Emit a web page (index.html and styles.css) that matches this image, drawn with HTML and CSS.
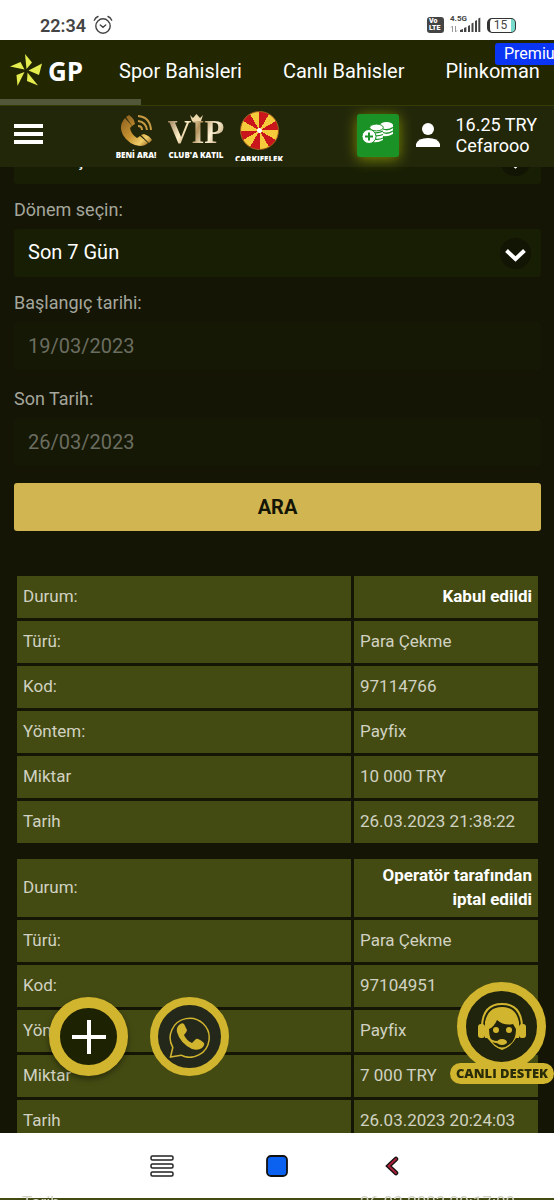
FILE: index.html
```html
<!DOCTYPE html>
<html lang="tr">
<head>
    <meta charset="UTF-8">
    <title>GP - İşlem Geçmişi</title>
    <meta name="viewport" content="width=device-width, initial-scale=1.0">
    <link rel="stylesheet" href="styles.css">
</head>
<body>

<div class="status-bar">
    <span class="clock">22:34</span>
    <svg class="alarm" width="20" height="20" viewBox="0 0 20 20" fill="none" stroke="#444" stroke-width="1.4" stroke-linecap="round">
        <circle cx="10" cy="11" r="7.2"/>
        <path d="M7.3 10l2.7 2.3 2.7-2.3M1.3 5.2Q2.5 2.6 5 1.5M18.7 5.2Q17.5 2.6 15 1.5"/>
    </svg>
    <div class="status-right">
        <span class="volte">Vo<br>LTE</span>
        <div class="signal">
            <span>4.5G</span>
            <svg width="31" height="16" viewBox="0 0 31 16" fill="#444">
                <path d="M10 15v-2l3-1v3zM14 15v-4l2.4-1v5zM18 15V9l2-1v7zM21.500 15V6.500l2-1V15zM25 15V4l2-1v12zM28.300 15V1.500l2-1V15z"/>
                <path d="M2.500 15V9M1 10.500L2.500 9M5.500 9v6M7 13.500L5.500 15" stroke="#999" fill="none"/>
            </svg>
        </div>
        <div class="battery"><span>15</span></div>
    </div>
</div>

<header class="site-header">
    <nav class="top-nav">
        <a class="logo" href="#">
            <svg width="32" height="33" viewBox="0 0 32 33" fill="#e4ec4e">
                <path d="M15 0L22 8.500 16.500 15z"/>
                <path d="M32 9.500L29 21 18.500 16.500z"/>
                <path d="M28 31.500L17 27 17.500 18.500z"/>
                <path d="M7.500 32L6.500 21 14.500 18z"/>
                <path d="M0 12.500L10.500 8 14.500 15.500z"/>
            </svg>
            <span>GP</span>
        </a>
        <a href="#">Spor Bahisleri</a>
        <a href="#">Canlı Bahisler</a>
        <a href="#">Plinkoman</a>
        <span class="premium">Premium</span>
        <div class="scroll-thumb"></div>
    </nav>

    <div class="user-bar">
        <button class="menu-btn" type="button" aria-label="Menü"><i></i><i></i><i></i></button>

        <div class="promos">
            <a class="promo call" href="#">
                <svg width="32" height="32" viewBox="0 0 32 32">
                    <defs>
                        <linearGradient id="gold" x1="0" y1="0" x2="1" y2="1">
                            <stop offset="0" stop-color="#8d6120"/>
                            <stop offset=".5" stop-color="#c89431"/>
                            <stop offset=".8" stop-color="#f0cd69"/>
                            <stop offset="1" stop-color="#9b6920"/>
                        </linearGradient>
                    </defs>
                    <path fill="url(#gold)" d="M5 3Q-2 11 3 20q6 10 17 11 5 0 8-3l-8-7-3 2q-6-4-7-10l2-2z"/>
                    <path fill="url(#gold)" d="M6 2l3-2q5 3 6 9l-3 2zM21 20l3-1q6 2 8 6l-3 3z"/>
                    <path fill="none" stroke="#c59a43" stroke-width="2" d="M18 11q4 0 4 4M18 6q8 1 9 9M18 1q12 1 13 14"/>
                </svg>
                <span>BENİ ARA!</span>
            </a>
            <a class="promo vip" href="#">
                <svg class="crown" width="15" height="8" viewBox="0 0 15 8" fill="#ecd8aa">
                    <path d="M1 1l3 3 3.500-4L11 4l3-3-2 6H3z"/>
                </svg>
                <b>VIP</b>
                <span>CLUB'A KATIL</span>
            </a>
            <a class="promo wheel" href="#">
                <div class="disc"></div>
                <span>ÇARKIFELEK</span>
            </a>
        </div>

        <button class="deposit" type="button" aria-label="Para yatır">
            <svg width="32" height="24" viewBox="0 0 32 24">
                <g fill="#fff">
                    <path d="M18 6v8q6 3 13-1V4z"/>
                    <ellipse cx="24.500" cy="4" rx="6.500" ry="3"/>
                    <path d="M8 8v12q6 3 13-1V7z"/>
                    <ellipse cx="14.500" cy="6.500" rx="6.800" ry="3.400" stroke="#1b9225"/>
                </g>
                <path d="M21 8q5 2 10-1.500M21 11.500q5 2 10-1.500M9 11q6 2 12-1M11 14.500q5 1 10-1M12 18q5 1 9-1" fill="none" stroke="#1b9225" stroke-width="1.300"/>
                <circle cx="7" cy="15.500" r="7" fill="#fff" stroke="#1b9225"/>
                <path d="M7 11.500v8M3 15.500h8" stroke="#1b9225" stroke-width="2"/>
            </svg>
        </button>

        <a class="account" href="#">
            <svg width="24" height="24" viewBox="0 0 24 24" fill="#fff">
                <circle cx="12" cy="6" r="6"/>
                <path d="M0 24v-3q2-6 12-6t12 6v3z"/>
            </svg>
            <span>16.25 TRY<br>Cefarooo</span>
        </a>
    </div>
</header>

<main>
    <form class="filter">
        <div class="select-box">
            <select id="type" aria-label="Tür"><option>Para Çekme</option></select>
            <svg viewBox="0 0 31 31"><path d="M6.500 12.500l9 8.500 9-8.500" fill="none" stroke="#fff" stroke-width="4"/></svg>
        </div>

        <label for="period">Dönem seçin:</label>
        <div class="select-box">
            <select id="period"><option>Son 7 Gün</option></select>
            <svg viewBox="0 0 31 31"><path d="M6.500 12.500l9 8.500 9-8.500" fill="none" stroke="#fff" stroke-width="4"/></svg>
        </div>

        <label for="from">Başlangıç tarihi:</label>
        <input type="text" id="from" value="19/03/2023" disabled>

        <label for="to">Son Tarih:</label>
        <input type="text" id="to" value="26/03/2023" disabled>

        <button class="search" type="button">ARA</button>
    </form>

    <table>
        <colgroup><col><col class="value"></colgroup>
        <tr><td>Durum:</td><td class="state">Kabul edildi</td></tr>
        <tr><td>Türü:</td><td>Para Çekme</td></tr>
        <tr><td>Kod:</td><td>97114766</td></tr>
        <tr><td>Yöntem:</td><td>Payfix</td></tr>
        <tr><td>Miktar</td><td>10 000 TRY</td></tr>
        <tr><td>Tarih</td><td>26.03.2023 21:38:22</td></tr>
    </table>

    <table>
        <colgroup><col><col class="value"></colgroup>
        <tr><td>Durum:</td><td class="state">Operatör tarafından iptal edildi</td></tr>
        <tr><td>Türü:</td><td>Para Çekme</td></tr>
        <tr><td>Kod:</td><td>97104951</td></tr>
        <tr><td>Yöntem:</td><td>Payfix</td></tr>
        <tr><td>Miktar</td><td>7 000 TRY</td></tr>
        <tr><td>Tarih</td><td>26.03.2023 20:24:03</td></tr>
    </table>
</main>

<div class="fabs">
    <button class="fab add" type="button" aria-label="Ekle">
        <svg width="34" height="34" viewBox="0 0 34 34" stroke="#fff" stroke-width="4"><path d="M17 0v34M0 17h34"/></svg>
    </button>
    <button class="fab whatsapp" type="button" aria-label="WhatsApp">
        <svg width="42" height="42" viewBox="0 0 42 42">
            <path d="M1.500 41l2.300-9.500A19.500 19.500 0 1 1 12 39.200z" fill="none" stroke="#d2b52f" stroke-width="1.500"/>
            <path fill="#d2b52f" d="M10 9q3-3 5-1l3 6q0 2-3 5 2 5 8 8l4-4q2-1 8 4 1 2-2 5-4 3-10 1Q11 27 8 16q-1-4 2-7z"/>
        </svg>
    </button>
</div>

<a class="support" href="#">
    <div class="support-ring">
        <svg width="50" height="50" viewBox="0 0 50 50">
            <path d="M5 24Q6 2 25 2t20 22" fill="none" stroke="#d2b52f" stroke-width="2"/>
            <rect x="1" y="22" width="7" height="14" rx="3" fill="#d2b52f"/>
            <rect x="42" y="22" width="7" height="14" rx="3" fill="#d2b52f"/>
            <path d="M8 20Q11 5 25 5t17 15v16h-3Q34 45 25 48 16 45 11 36H8z" fill="#d2b52f"/>
            <path d="M12 27q5-2 8-9 7 6 16 4l3 5q0 11-6 15-8 7-16 0-5-5-5-15z" fill="#20240d"/>
            <circle cx="19" cy="28" r="3" fill="#d2b52f"/>
            <circle cx="32" cy="28" r="3" fill="#d2b52f"/>
            <path d="M10 34q4 7 13 6" fill="none" stroke="#d2b52f" stroke-width="2"/>
            <ellipse cx="25" cy="40" rx="5" ry="3" fill="#d2b52f"/>
        </svg>
    </div>
    <span>CANLI DESTEK</span>
</a>

<div class="system-nav">
    <button type="button" aria-label="Son uygulamalar">
        <svg width="24" height="22" viewBox="0 0 24 22" fill="#fff" stroke="#222" stroke-width="1.500">
            <rect x="1" y="1" width="22" height="4" rx="1.500"/>
            <rect x="1" y="9" width="22" height="4" rx="1.500"/>
            <rect x="1" y="17" width="22" height="4" rx="1.500"/>
        </svg>
    </button>
    <button type="button" aria-label="Ana ekran">
        <svg width="22" height="22" viewBox="0 0 22 22"><rect x="1" y="1" width="20" height="20" rx="4" fill="#0b62f0" stroke="#111" stroke-width="1.800"/></svg>
    </button>
    <button type="button" aria-label="Geri">
        <svg width="14" height="20" viewBox="0 0 14 20" fill="none" stroke-linecap="round">
            <path d="M11 3L3.500 10l7.500 7" stroke="#111" stroke-width="4.500"/>
            <path d="M11 3L3.500 10l7.500 7" stroke="#a8213a" stroke-width="2"/>
        </svg>
    </button>
</div>

<!-- next record showing under the system bar -->
<div class="page-edge"><span>Tarih</span><span>26.03.2023 20:17:00</span></div>

</body>
</html>
```
FILE: styles.css
```css
* {
    box-sizing: border-box;
}

body {
    font-family: Roboto, "Liberation Sans", sans-serif;
    background: #141504;
    color: #fff;
    margin: 0;
    height: 100vh;
    overflow: hidden;
}

a {
    color: #fff;
    text-decoration: none;
}

button {
    border: none;
    padding: 0;
    font-family: inherit;
    cursor: pointer;
}

svg {
    display: block;
    flex: none;
}

/* phone status bar */
.status-bar {
    position: relative;
    z-index: 2;
    display: flex;
    align-items: center;
    height: 40px;
    padding: 10px 38px 0 40px;
    background: #fff;
    color: #444;
}

.clock {
    font-size: 18px;
    font-weight: 600;
    margin-right: 7px;
}

.status-right {
    display: flex;
    align-items: center;
    gap: 6px;
    margin-left: auto;
}

.volte {
    width: 17px;
    height: 16px;
    padding: 1px 2px;
    border-radius: 3px;
    background: #444;
    color: #fff;
    font-size: 7px;
    font-weight: 900;
    line-height: 7px;
}

.signal {
    position: relative;
}

.signal span {
    position: absolute;
    top: -2px;
    left: 0;
    font-size: 8px;
    font-weight: bold;
    line-height: 8px;
}

.battery {
    width: 29px;
    height: 15px;
    border: 1px solid #333;
    border-left-width: 3px;
    border-radius: 5px;
    background: linear-gradient(to left, #77dccb 4px, #fff 4px);
    font-size: 12px;
    line-height: 13px;
    text-align: center;
    padding-right: 4px;
}

/* header */
.site-header {
    position: relative;
    z-index: 2;
    background: #22270a;
}

.top-nav {
    position: relative;
    display: flex;
    align-items: center;
    gap: 41px;
    height: 66px;
    padding: 0 0 4px 10px;
    background: #222601;
    border-bottom: 1px solid #353c05;
    font-size: 20px;
    white-space: nowrap;
    overflow: hidden;
}

.logo {
    display: flex;
    align-items: center;
    gap: 6px;
    width: 68px;
    font-family: "Open Sans", sans-serif;
    font-size: 26px;
    font-weight: bold;
}

.premium {
    position: absolute;
    top: 3px;
    left: calc(100% - 59px);
    padding: 0 9px;
    border-radius: 3px;
    background: #0a35f5;
    font-size: 16px;
    line-height: 22px;
}

.scroll-thumb {
    position: absolute;
    left: 0;
    bottom: 0;
    width: 141px;
    height: 6px;
    background: #53573a;
}

.user-bar {
    display: flex;
    align-items: center;
    height: 61px;
    padding: 0 17px 0 14px;
}

.menu-btn {
    display: grid;
    gap: 4px;
    width: 29px;
    background: none;
    margin-bottom: 6px;
}

.menu-btn i {
    height: 4px;
    background: #fff;
}

.promos {
    display: flex;
    flex: 1;
    gap: 10px;
    height: 52px;
    margin-bottom: 4px;
    padding: 4px 0 0 71px;
    overflow: hidden;
}

.promo {
    display: flex;
    flex-direction: column;
    align-items: center;
    font-family: "Open Sans", sans-serif;
    font-size: 8px;
    font-weight: 800;
    line-height: 10px;
    white-space: nowrap;
}

.call {
    width: 44px;
}

.call svg {
    margin: 2px 0 3px;
}

.vip {
    position: relative;
    width: 56px;
}

.vip b {
    font-family: "Liberation Serif", serif;
    font-size: 33px;
    line-height: 35px;
    margin-top: 2px;
    background: linear-gradient(120deg, #8a6b45, #fff0c9 30%, #b3925c 50%, #fff3d6 70%, #a6824e);
    -webkit-background-clip: text;
    background-clip: text;
    color: transparent;
}

.crown {
    position: absolute;
    top: 1px;
    left: 21px;
}

.wheel {
    width: 50px;
}

.disc {
    flex: none;
    width: 39px;
    height: 39px;
    margin: -2px 0 4px;
    border: 1px solid #a3621d;
    border-radius: 50%;
    background: radial-gradient(circle, #fff 2px, transparent 3px), repeating-conic-gradient(#c9161c 0 30deg, #f5cb3c 30deg 60deg);
}

.deposit {
    display: grid;
    place-items: center;
    width: 42px;
    height: 43px;
    margin: 0 17px 2px 0;
    padding-bottom: 6px;
    border-radius: 3px;
    background: #1b9225;
    box-shadow: 0 2px 14px #7d8a05;
}

.account {
    display: flex;
    align-items: center;
    gap: 15px;
    font-size: 18px;
    line-height: 21px;
    margin-bottom: 4px;
}

/* filter form, scrolled a little under the header */
main {
    margin-top: -31px;
    padding: 0 13px 0 14px;
}

.filter {
    display: flex;
    flex-direction: column;
    margin-bottom: 42px;
}

.filter label {
    margin-bottom: 7px;
    color: #a5a69c;
    font-size: 18px;
    line-height: 24px;
}

.select-box {
    position: relative;
    margin-bottom: 14px;
}

.select-box select,
.filter input {
    display: block;
    width: 100%;
    height: 48px;
    padding: 0 14px;
    border: none;
    border-radius: 3px;
    font-family: inherit;
    font-size: 20px;
}

.select-box select {
    appearance: none;
    background: #181e04;
    color: #fff;
    padding-bottom: 2px;
}

.select-box svg {
    position: absolute;
    right: 10px;
    top: 9px;
    width: 31px;
    height: 31px;
    border-radius: 50%;
    background: #121404;
    pointer-events: none;
}

.filter input {
    margin-bottom: 17px;
    background: #151805;
    color: #6b6d60;
}

.search {
    height: 48px;
    border-radius: 3px;
    background: #d0b551;
    color: #141504;
    font-size: 20px;
    font-weight: bold;
}

/* transactions */
table {
    width: 100%;
    margin-bottom: 10px;
    table-layout: fixed;
    border-spacing: 3px;
    font-size: 17px;
    line-height: 24px;
    color: #d0d2c2;
}

.value {
    width: 184px;
}

td {
    height: 42px;
    padding: 4px 6px 6px;
    background: #444b12;
}

.state {
    color: #fff;
    font-weight: bold;
    text-align: right;
}

/* floating buttons */
.fabs {
    position: fixed;
    left: 49px;
    bottom: 124px;
    display: flex;
    gap: 22px;
}

.fab {
    display: grid;
    place-items: center;
    width: 79px;
    height: 79px;
    border: 8px solid #d2b52f;
    border-radius: 50%;
    background: #23281a;
}

.add {
    border-width: 11px;
    background: #1d2203;
    box-shadow: 0 3px 6px rgba(0, 0, 0, 0.4);
}

.support {
    position: fixed;
    right: 0;
    bottom: 116px;
    display: flex;
    flex-direction: column;
    align-items: center;
}

.support-ring {
    display: grid;
    place-items: center;
    width: 89px;
    height: 89px;
    margin-bottom: -8px;
    border: 9px solid #d2b52f;
    border-radius: 50%;
    background: #20240d;
}

.support span {
    padding: 0 6px;
    border-radius: 11px;
    background: #d2b52f;
    color: #2b2c08;
    font-family: "Open Sans", sans-serif;
    font-size: 13px;
    font-weight: 800;
    line-height: 21px;
}

/* android navigation */
.system-nav {
    position: fixed;
    left: 0;
    right: 0;
    bottom: 2px;
    display: flex;
    justify-content: center;
    align-items: center;
    gap: 91px;
    height: 65px;
    background: #fff;
}

.system-nav button {
    display: grid;
    place-items: center;
    width: 24px;
    background: none;
}

.page-edge {
    position: fixed;
    left: 0;
    right: 0;
    bottom: 0;
    display: grid;
    grid-template-columns: 1fr 180px;
    height: 5px;
    padding: 0 14px 0 22px;
    background: linear-gradient(to top, #444b12 2px, transparent 2px);
    overflow: hidden;
    color: #d0d2c2;
    font-size: 17px;
    line-height: 14px;
}
```
